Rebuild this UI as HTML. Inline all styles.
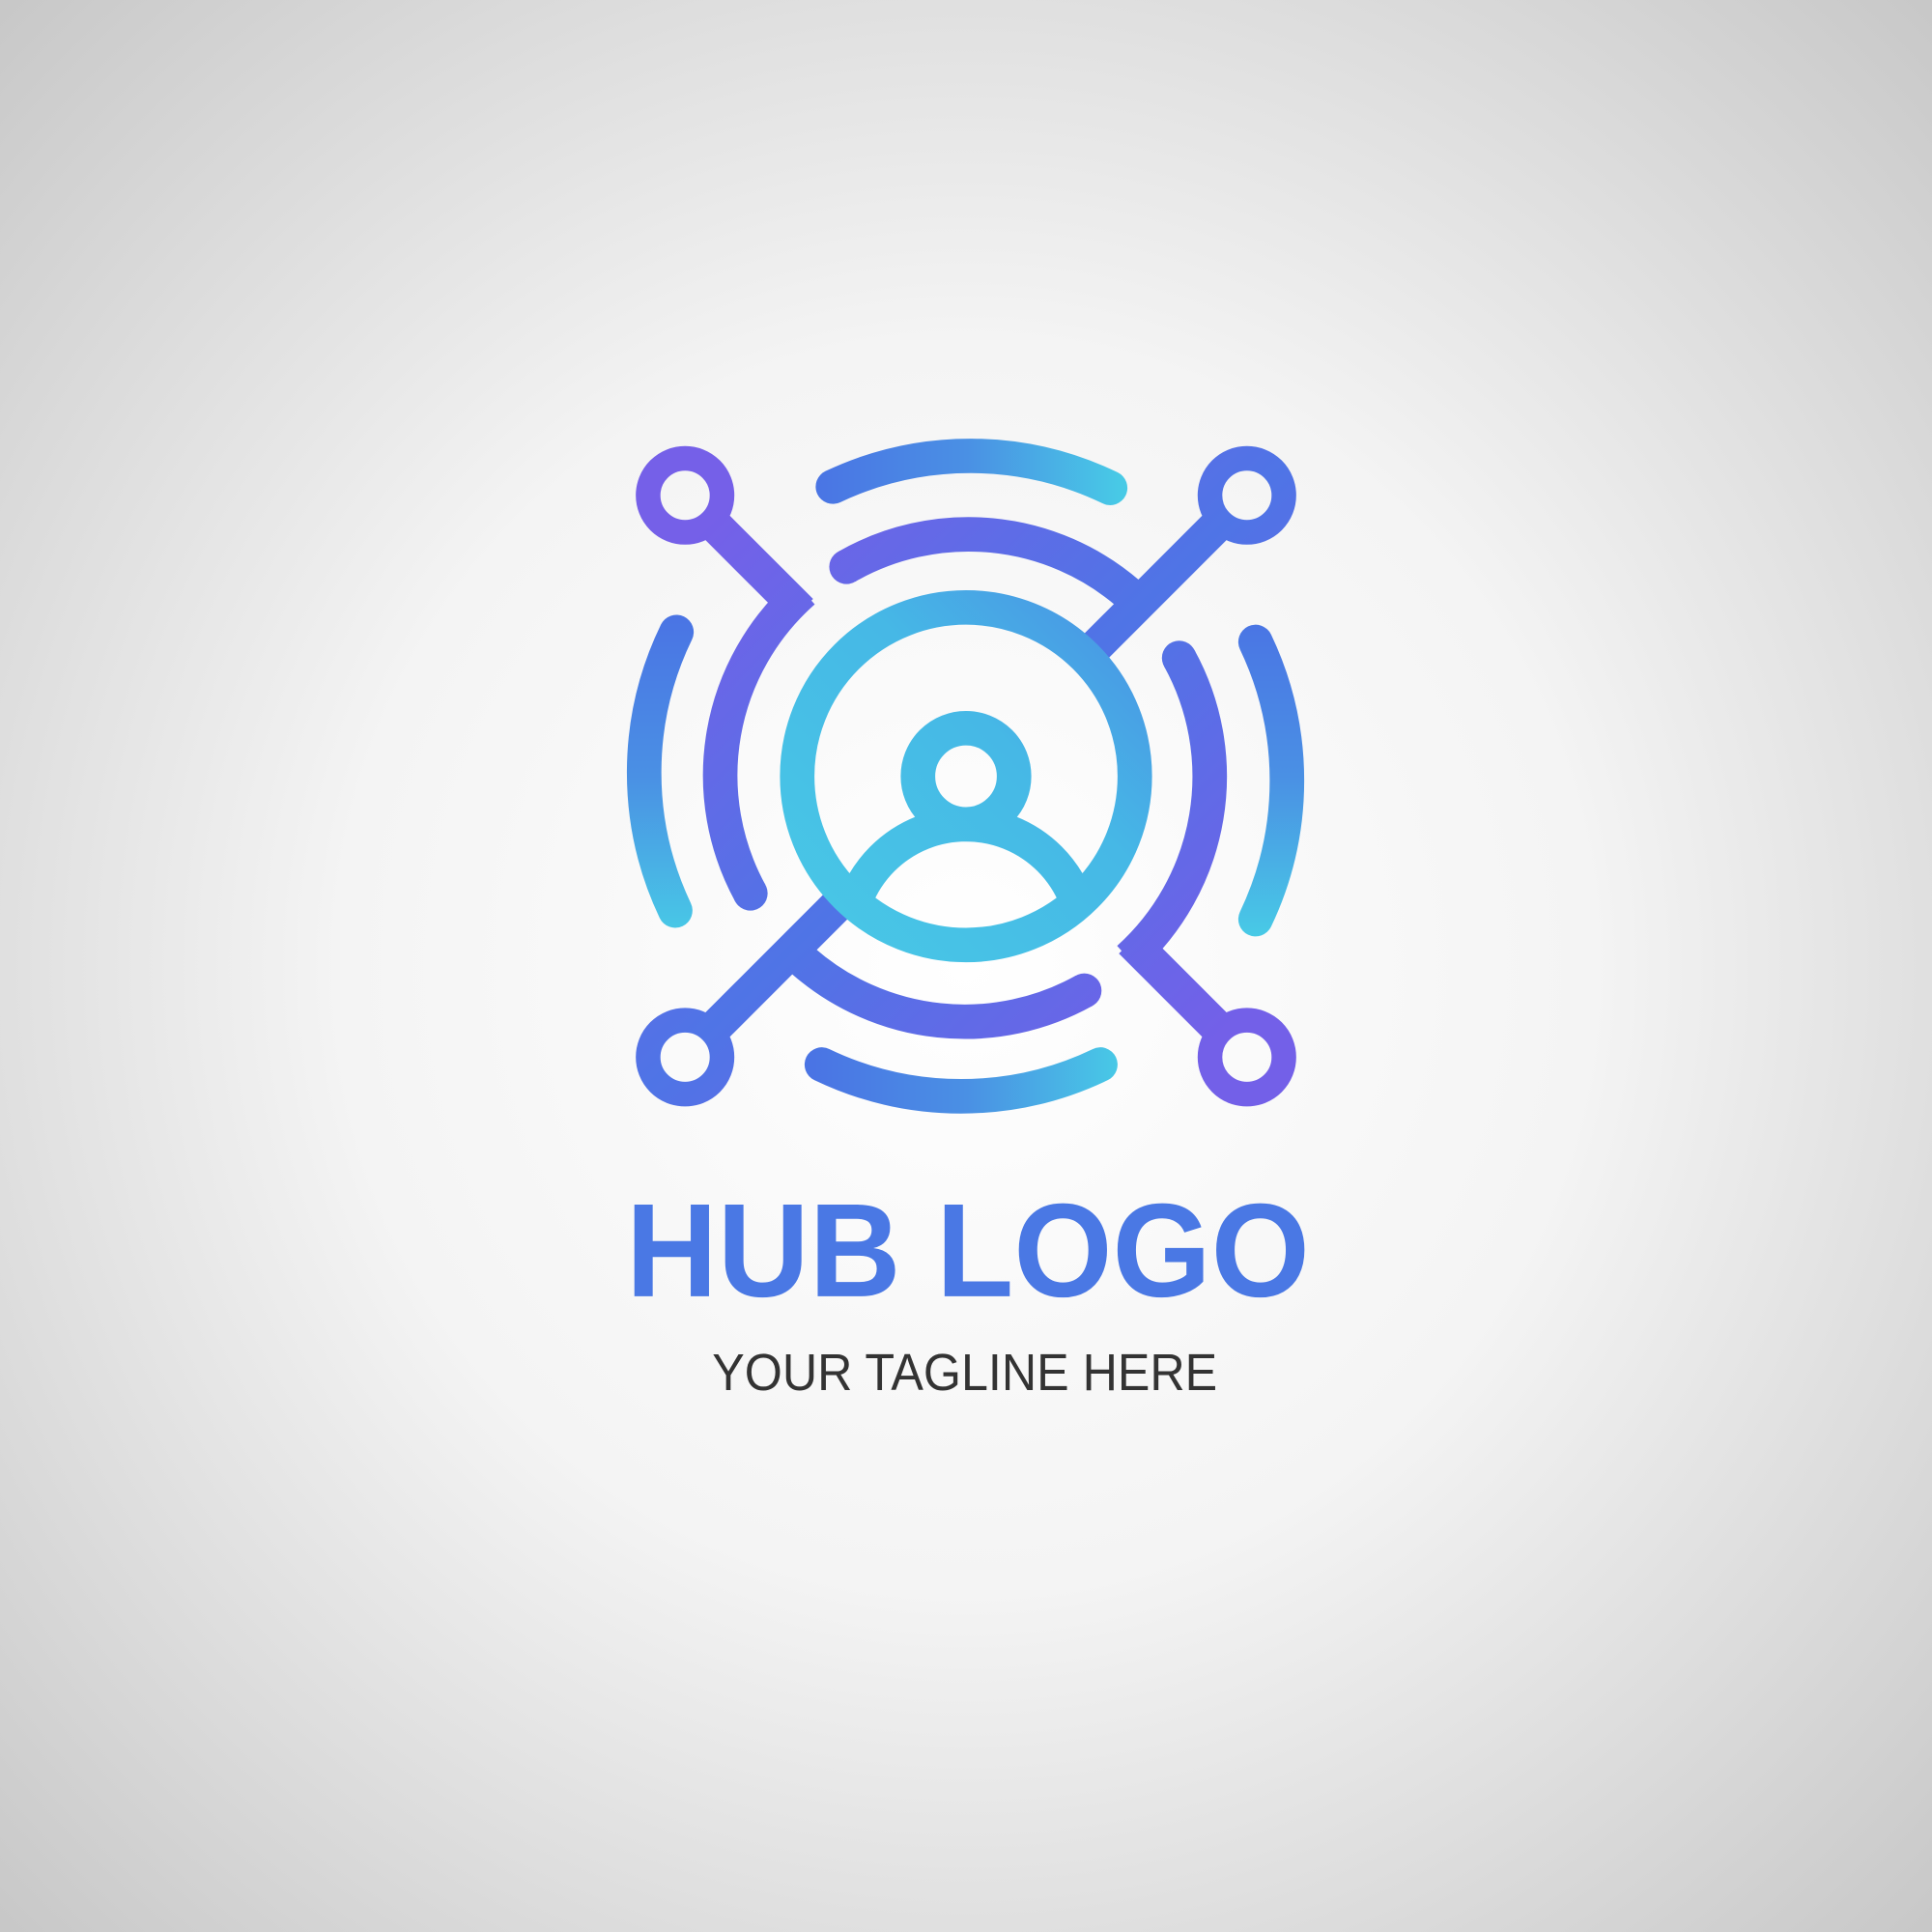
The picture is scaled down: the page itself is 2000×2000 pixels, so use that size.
<!DOCTYPE html>
<html><head><meta charset="utf-8"><style>
html,body{margin:0;padding:0;width:2000px;height:2000px;overflow:hidden}
svg{display:block}
</style></head><body>
<svg width="2000" height="2000" viewBox="0 0 1568 1568" xmlns="http://www.w3.org/2000/svg">
<defs>
<radialGradient id="bg" cx="50%" cy="50%" r="72%">
<stop offset="0" stop-color="#ffffff"/><stop offset="0.45" stop-color="#f4f4f4"/><stop offset="1" stop-color="#c6c6c6"/>
</radialGradient>
<linearGradient id="cy" x1="640" y1="780" x2="930" y2="480" gradientUnits="userSpaceOnUse">
<stop offset="0" stop-color="#48c9e6"/><stop offset="0.6" stop-color="#46b8e6"/><stop offset="1" stop-color="#4a8fe4"/>
</linearGradient>
<linearGradient id="pu" x1="580" y1="420" x2="990" y2="840" gradientUnits="userSpaceOnUse">
<stop offset="0" stop-color="#7560e8"/><stop offset="0.5" stop-color="#4f74e6"/><stop offset="1" stop-color="#7360e8"/>
</linearGradient>
<linearGradient id="oh" x1="660" y1="0" x2="910" y2="0" gradientUnits="userSpaceOnUse">
<stop offset="0" stop-color="#4a74e4"/><stop offset="0.5" stop-color="#4a90e4"/><stop offset="1" stop-color="#48cae6"/>
</linearGradient>
<linearGradient id="ov" x1="0" y1="500" x2="0" y2="760" gradientUnits="userSpaceOnUse">
<stop offset="0" stop-color="#4a74e4"/><stop offset="0.5" stop-color="#4a90e4"/><stop offset="1" stop-color="#48cae6"/>
</linearGradient>
<clipPath id="cc"><circle cx="784" cy="630" r="137"/></clipPath>
</defs>
<rect width="1568" height="1568" fill="url(#bg)"/>
<g fill="none" stroke-linecap="round" stroke-width="28">
<g stroke="url(#pu)" stroke-linecap="butt">
<line x1="582" y1="428" x2="650" y2="496"/>
<line x1="986" y1="428" x2="880" y2="534"/>
<line x1="582" y1="832" x2="678" y2="736"/>
<line x1="986" y1="832" x2="918" y2="764"/>
</g>
<g stroke="url(#pu)" stroke-width="20">
<circle cx="556" cy="402" r="30"/><circle cx="1012" cy="402" r="30"/>
<circle cx="556" cy="858" r="30"/><circle cx="1012" cy="858" r="30"/>
</g>
<g stroke="url(#pu)" stroke-linecap="butt">
<path d="M687 460 A199 199 0 0 1 916 482"/>
<path d="M652 480 A199 199 0 0 0 609 725"/>
<path d="M957 534 A199 199 0 0 1 916 778"/>
<path d="M652 780 A199 199 0 0 0 880 804"/>
</g>
<g fill="url(#pu)" stroke="none">
<circle cx="687" cy="460" r="14"/><circle cx="609" cy="725" r="14"/>
<circle cx="957" cy="534" r="14"/><circle cx="880" cy="804" r="14"/>
</g>
<path stroke="url(#oh)" d="M676 395 A261 261 0 0 1 901 396"/>
<path stroke="url(#oh)" d="M667 864 A261 261 0 0 0 893 864"/>
<path stroke="url(#ov)" d="M549 513 A261 261 0 0 0 548 739"/>
<path stroke="url(#ov)" d="M1019 521 A261 261 0 0 1 1019 746"/>
<g stroke="url(#cy)">
<circle cx="784" cy="630" r="137"/>
<circle cx="784" cy="630" r="39"/>
<circle cx="784" cy="765" r="96" clip-path="url(#cc)"/>
</g>
</g>
<text x="508" y="1052" font-family="Liberation Sans, sans-serif" font-weight="bold" font-size="108" fill="#4a78e4" textLength="555" lengthAdjust="spacingAndGlyphs">HUB LOGO</text>
<text x="578" y="1128" font-family="Liberation Sans, sans-serif" font-size="42" fill="#333" textLength="410" lengthAdjust="spacingAndGlyphs">YOUR TAGLINE HERE</text>
</svg>
</body></html>
